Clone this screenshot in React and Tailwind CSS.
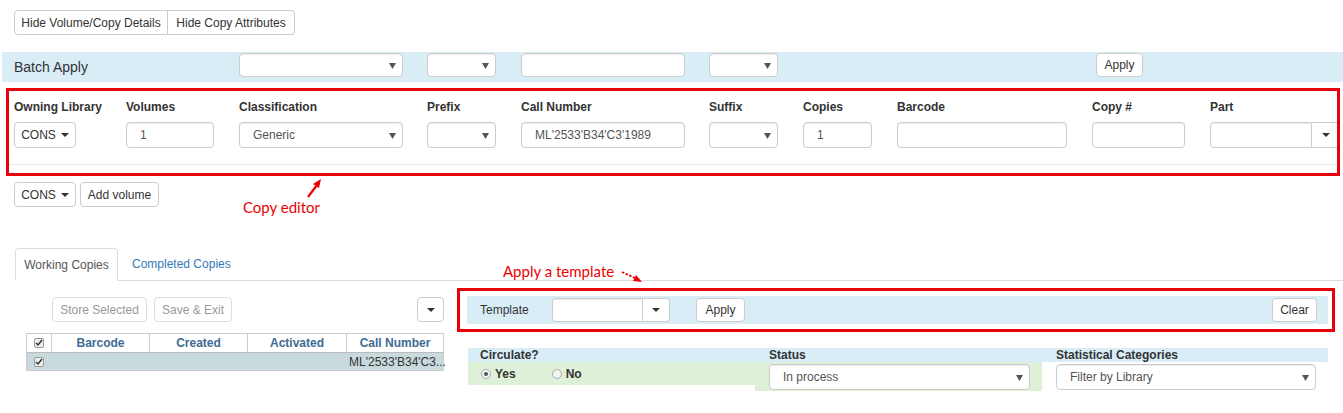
import React from "react";

const Caret = ({ className = "" }) => (
  <svg width="8" height="4" viewBox="0 0 8 4" className={className}>
    <path d="M0 0h8L4 4z" fill="#333" />
  </svg>
);

const Tri = () => (
  <svg width="7" height="7" viewBox="0 0 7 7">
    <path d="M0 1h7L3.5 7z" fill="#555" />
  </svg>
);

const Btn = ({ className = "", children, disabled }) => (
  <button
    className={`flex items-center justify-center border border-[#ccc] bg-white rounded-[4px] text-[12px] ${
      disabled ? "text-[#999] border-[#ddd]" : "text-[#333]"
    } ${className}`}
  >
    {children}
  </button>
);

const Select = ({ className = "", value = "" }) => (
  <div
    className={`flex items-center justify-between border border-[#ccc] rounded-[4px] bg-white pl-[13px] pr-[6px] text-[12px] text-[#555] shadow-[inset_0_1px_1px_rgba(0,0,0,0.075)] ${className}`}
  >
    <span>{value}</span>
    <Tri />
  </div>
);

const Input = ({ className = "", value = "" }) => (
  <div
    className={`flex items-center border border-[#ccc] rounded-[4px] bg-white pl-[13px] text-[12px] text-[#555] shadow-[inset_0_1px_1px_rgba(0,0,0,0.075)] ${className}`}
  >
    {value}
  </div>
);

const Check = () => (
  <div className="w-[10px] h-[10px] border border-[#999] rounded-[2px] bg-[#eee] flex items-center justify-center">
    <svg width="8" height="8" viewBox="0 0 8 8">
      <path d="M1 4l2 2 4-5" stroke="#333" strokeWidth="1.5" fill="none" />
    </svg>
  </div>
);

const Radio = ({ on }) => (
  <div className="w-[10px] h-[10px] rounded-full border border-[#aaa] bg-[#f4f4f4] flex items-center justify-center">
    {on && <div className="w-[4px] h-[4px] rounded-full bg-[#555]" />}
  </div>
);

// red annotation frame
const RedFrame = ({ className = "", children }) => (
  <div className={`border-[3px] border-solid border-[#e8000b] ${className}`}>{children}</div>
);

const fields = [
  { label: "Owning Library", w: "w-[112px]", ctl: <Btn className="w-[62px] h-[26px]">CONS<Caret className="ml-[5px]" /></Btn> },
  { label: "Volumes", w: "w-[113px]", ctl: <Input className="w-[88px] h-[26px]" value="1" /> },
  { label: "Classification", w: "w-[188px]", ctl: <Select className="w-[164px] h-[26px]" value="Generic" /> },
  { label: "Prefix", w: "w-[94px]", ctl: <Select className="w-[69px] h-[26px]" /> },
  { label: "Call Number", w: "w-[188px]", ctl: <Input className="w-[164px] h-[26px]" value="ML'2533'B34'C3'1989" /> },
  { label: "Suffix", w: "w-[94px]", ctl: <Select className="w-[69px] h-[26px]" /> },
  { label: "Copies", w: "w-[94px]", ctl: <Input className="w-[69px] h-[26px]" value="1" /> },
  { label: "Barcode", w: "w-[195px]", ctl: <Input className="w-[170px] h-[26px]" /> },
  { label: "Copy #", w: "w-[118px]", ctl: <Input className="w-[93px] h-[26px]" /> },
  {
    label: "Part",
    w: "w-[130px]",
    ctl: (
      <div className="flex">
        <Input className="w-[105px] h-[26px] rounded-r-none" />
        <Btn className="w-[28px] h-[26px] rounded-l-none border-l-0 shrink-0">
          <Caret />
        </Btn>
      </div>
    ),
  },
];

export default function App() {
  return (
    <div className="relative w-[1343px] h-[413px] overflow-hidden bg-white text-[#333] font-['Liberation_Sans',Arial,sans-serif]">
      {/* top toggles */}
      <div className="pt-[10px] pl-[14px] flex">
        <Btn className="w-[154px] h-[25px] rounded-r-none">Hide Volume/Copy Details</Btn>
        <Btn className="w-[127px] h-[25px] rounded-l-none border-l-0">Hide Copy Attributes</Btn>
      </div>

      {/* batch apply */}
      <div className="mt-[17px] ml-[2px] h-[30px] bg-[#d9edf7] flex items-start pt-[1px]">
        <div className="w-[237px] pl-[12px] text-[14px] leading-[28px]">Batch Apply</div>
        <Select className="w-[164px] h-[24px]" />
        <Select className="w-[69px] h-[24px] ml-[24px]" />
        <Input className="w-[164px] h-[24px] ml-[25px]" />
        <Select className="w-[69px] h-[24px] ml-[24px]" />
        <Btn className="w-[47px] h-[24px] ml-[318px]">Apply</Btn>
      </div>

      {/* copy editor */}
      <RedFrame className="mt-[6px] ml-[6px] w-[1334px] h-[88px] overflow-hidden">
        <div className="flex pl-[5px] pt-[8px]">
          {fields.map((f) => (
            <div key={f.label} className={`${f.w} shrink-0`}>
              <div className="text-[12px] font-bold leading-[17px] mb-[6px]">{f.label}</div>
              {f.ctl}
            </div>
          ))}
        </div>
        <div className="mt-[16px] h-px bg-[#e8e8e8]" />
      </RedFrame>

      <div className="mt-[6px] pl-[14px] flex gap-[4px]">
        <Btn className="w-[62px] h-[25px]">CONS<Caret className="ml-[5px]" /></Btn>
        <Btn className="w-[79px] h-[25px]">Add volume</Btn>
      </div>

      {/* tabs */}
      <div className="mt-[41px] ml-[15px] flex border-b border-[#ddd] text-[12px]">
        <div className="w-[103px] h-[33px] -mb-px flex items-center justify-center border border-[#ddd] border-b-white rounded-t-[4px] bg-white text-[#555]">
          Working Copies
        </div>
        <div className="h-[32px] ml-[2px] px-[12px] flex items-center text-[#337ab7]">Completed Copies</div>
      </div>

      <div className="flex">
        {/* left: copies table */}
        <div className="w-[457px] shrink-0">
          <div className="mt-[16px] flex pr-[13px]">
            <Btn disabled className="ml-[52px] w-[95px] h-[25px]">Store Selected</Btn>
            <Btn disabled className="ml-[7px] w-[78px] h-[25px]">Save &amp; Exit</Btn>
            <Btn className="ml-auto w-[27px] h-[25px]"><Caret /></Btn>
          </div>
          <div className="mt-[11px] ml-[26px] w-[418px] border border-[#ccc] text-[12px]">
            <div className="grid grid-cols-[24px_98px_98px_99px_1fr] h-[18px] font-bold text-[#3d6b94] bg-white">
              <div className="flex items-center justify-center"><Check /></div>
              <div className="border-l border-[#ccc] flex items-center justify-center">Barcode</div>
              <div className="border-l border-[#ccc] flex items-center justify-center">Created</div>
              <div className="border-l border-[#ccc] flex items-center justify-center">Activated</div>
              <div className="border-l border-[#ccc] flex items-center justify-center">Call Number</div>
            </div>
            <div className="grid grid-cols-[24px_98px_98px_99px_1fr] h-[18px] bg-[#c9dade] border-t border-[#bbb]">
              <div className="flex items-center justify-center"><Check /></div>
              <div />
              <div />
              <div />
              <div className="flex items-center pl-[3px] whitespace-nowrap">ML'2533'B34'C3...</div>
            </div>
          </div>
        </div>

        {/* right: template + attributes */}
        <div className="w-[878px] shrink-0">
          <RedFrame className="mt-[7px] h-[44px] pt-[5px] pl-[7px] pr-[4px]">
            <div className="h-[28px] bg-[#d9edf7] flex items-center text-[12px]">
              <div className="w-[85px] pl-[13px]">Template</div>
              <Input className="w-[91px] h-[24px] rounded-r-none" />
              <Btn className="w-[27px] h-[24px] rounded-l-none border-l-0"><Caret /></Btn>
              <Btn className="ml-[26px] w-[49px] h-[24px]">Apply</Btn>
              <Btn className="ml-auto mr-[11px] w-[45px] h-[24px]">Clear</Btn>
            </div>
          </RedFrame>

          <div className="mt-[16px] ml-[11px] w-[860px] text-[12px]">
            <div className="grid grid-cols-[287px_287px_286px] h-[14px] bg-[#d9edf7] font-bold leading-[14px]">
              <div className="pl-[12px]">Circulate?</div>
              <div className="pl-[14px]">Status</div>
              <div className="pl-[14px]">Statistical Categories</div>
            </div>
            <div className="grid grid-cols-[287px_287px_286px] items-start">
              <div className="h-[23px] bg-[#dff0d8] flex items-center pl-[13px] font-bold">
                <Radio on />
                <span className="ml-[4px]">Yes</span>
                <div className="ml-[36px]"><Radio /></div>
                <span className="ml-[4px]">No</span>
              </div>
              <div className="h-[29px] bg-[#dff0d8] pl-[14px] pt-[2px]">
                <Select className="w-[261px] h-[26px]" value="In process" />
              </div>
              <div className="pl-[14px] pt-[2px]">
                <Select className="w-[260px] h-[26px]" value="Filter by Library" />
              </div>
            </div>
          </div>
        </div>
      </div>

      {/* annotations */}
      <div className="absolute left-[243px] top-[198px] text-[15px] leading-[18px] text-[#e00] font-[Lato,'Open_Sans',sans-serif]">
        Copy editor
      </div>
      <svg className="absolute left-[300px] top-[176px]" width="30" height="26" viewBox="0 0 30 26">
        <path d="M8 21L17 9" stroke="#e00" strokeWidth="2.2" />
        <path d="M21 3l-8 5 6 4z" fill="#e00" />
      </svg>
      <div className="absolute left-[503px] top-[262px] text-[15px] leading-[18px] text-[#e00] font-[Lato,'Open_Sans',sans-serif]">
        Apply a template
      </div>
      <svg className="absolute left-[618px] top-[266px]" width="28" height="20" viewBox="0 0 28 20">
        <path d="M4 6L17 12" stroke="#e00" strokeWidth="1.8" strokeDasharray="2.5 1.5" />
        <path d="M24 16l-9-1 3-6z" fill="#e00" />
      </svg>
    </div>
  );
}
